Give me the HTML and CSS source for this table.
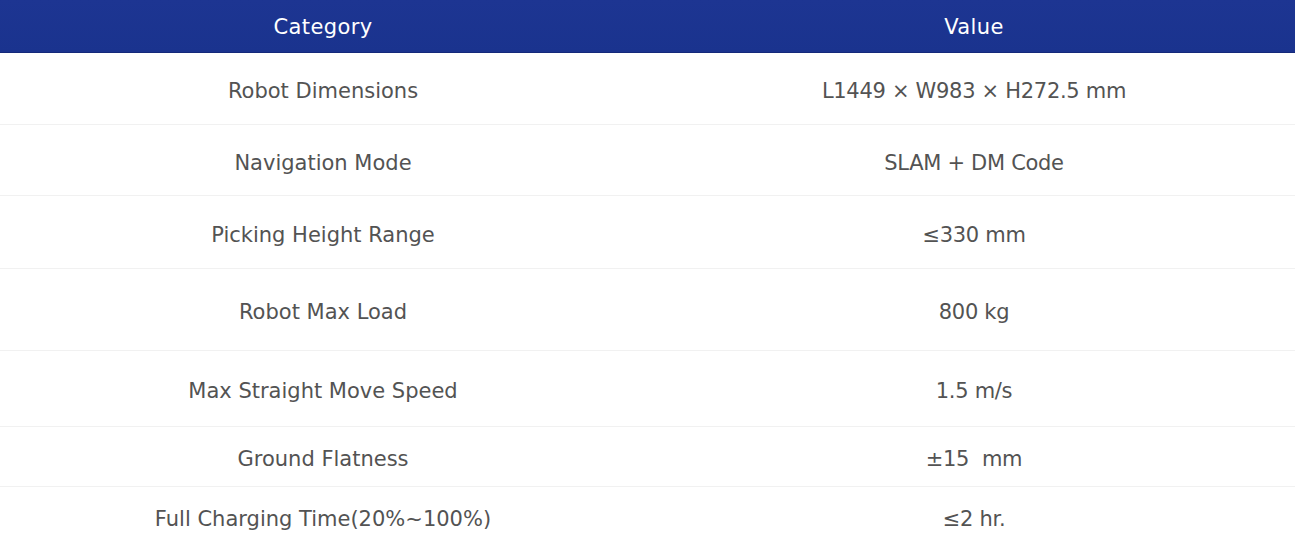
FILE: index.html
```html
<!DOCTYPE html>
<html lang="en">
<head>
<meta charset="utf-8">
<title>Specifications</title>
<link rel="stylesheet" href="styles.css">
</head>
<body>
<div class="spec">
  <div class="row head">
    <div class="cell">Category</div>
    <div class="cell val">Value</div>
  </div>
  <div class="row r1">
    <div class="cell">Robot Dimensions</div>
    <div class="cell val">L1449 × W983 × H272.5 mm</div>
  </div>
  <div class="row r2">
    <div class="cell">Navigation Mode</div>
    <div class="cell val">SLAM + DM Code</div>
  </div>
  <div class="row r3">
    <div class="cell">Picking Height Range</div>
    <div class="cell val">≤330 mm</div>
  </div>
  <div class="row r4">
    <div class="cell">Robot Max Load</div>
    <div class="cell val">800 kg</div>
  </div>
  <div class="row r5">
    <div class="cell">Max Straight Move Speed</div>
    <div class="cell val">1.5 m/s</div>
  </div>
  <div class="row r6">
    <div class="cell">Ground Flatness</div>
    <div class="cell val">±15&nbsp; mm</div>
  </div>
  <div class="row r7">
    <div class="cell">Full Charging Time(20%~100%)</div>
    <div class="cell val">≤2 hr.</div>
  </div>
</div>
</body>
</html>
```
FILE: styles.css
```css
html, body {
  margin: 0;
  padding: 0;
  background: #ffffff;
}

.spec {
  width: 1295px;
  font-family: "DejaVu Sans", "Liberation Sans", sans-serif;
  color: #535353;
}

.row {
  display: grid;
  grid-template-columns: 646px 1fr;
  border-bottom: 1px solid #f1f1f1;
}

.cell {
  display: flex;
  align-items: center;
  justify-content: center;
  font-size: 21px;
  padding-top: 5px;
}

.cell.val {
  padding-left: 7px;
  letter-spacing: -0.3px;
}

.head {
  height: 52px;
  background: linear-gradient(180deg, #1d3592 0%, #1a338e 100%);
  border-bottom: 1px solid #14297a;
  color: #ffffff;
}

.head .cell {
  font-size: 21px;
  letter-spacing: 0.4px;
  padding-top: 1px;
}

.r1 { height: 71px; }
.r2 { height: 70px; }
.r3 { height: 72px; }
.r4 { height: 81px; }
.r5 { height: 75px; }
.r6 { height: 59px; }
.r7 { height: 58px; border-bottom: none; }
```
